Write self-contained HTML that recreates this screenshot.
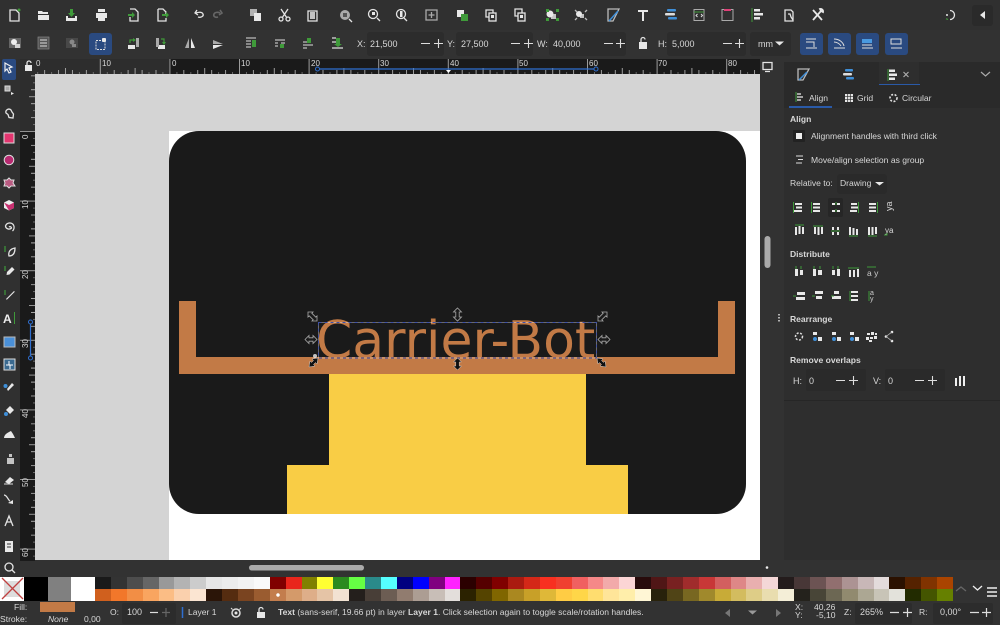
<!DOCTYPE html>
<html><head><meta charset="utf-8"><style>
html,body{margin:0;padding:0;background:#323232;width:1000px;height:625px;overflow:hidden}
svg{position:absolute;left:0;top:0}
text{font-family:"Liberation Sans",sans-serif;font-size:8.55px;fill:#d8d8d8}
text.n{font-size:9px}
.pal{position:absolute;left:95px;top:577px;width:858px;height:24px;display:grid;grid-template-columns:repeat(54,1fr);grid-template-rows:12px 12px}
.pal i{display:block}
.i{fill:none;stroke:#e4e4e4;stroke-width:1.3}
.f{fill:#e8e8e8}
.g{fill:#3f9a3a}
.gs{fill:none;stroke:#3f9a3a;stroke-width:1.2}
.b{fill:#3f8fd8}
</style></head><body>
<svg width="1000" height="625" viewBox="0 0 1000 625">
<defs>
<pattern id="tp" patternUnits="userSpaceOnUse" x="169.4" y="59" width="69.6" height="15"><path d="M.5 0V15M14.4 11V15M28.3 11V15M35.3 9V15M42.3 11V15M56.2 11V15" stroke="#bbb" stroke-width=".8"/><path d="M7.5 13V15M21.4 13V15M49.2 13V15M63.1 13V15" stroke="#888" stroke-width=".7"/></pattern>
<pattern id="lp" patternUnits="userSpaceOnUse" x="20" y="131" width="15" height="69.6"><path d="M0 .5H15M11 14.4H15M11 28.3H15M9 35.3H15M11 42.3H15M11 56.2H15" stroke="#bbb" stroke-width=".8"/><path d="M13 7.5H15M13 21.4H15M13 49.2H15M13 63.1H15" stroke="#888" stroke-width=".7"/></pattern>
</defs>
<rect width="1000" height="625" fill="#323232"/>
<rect y="0" width="1000" height="30" fill="#303030"/>
<rect y="30" width="1000" height="29" fill="#323232"/>

<!-- rulers -->
<rect x="20" y="59" width="740" height="15" fill="#2d2d2d"/>
<rect x="169" y="59" width="591" height="15" fill="#1a1a1a"/>
<rect x="20" y="59" width="15" height="502" fill="#2d2d2d"/>
<rect x="20" y="131" width="15" height="430" fill="#1a1a1a"/>
<rect x="35" y="59" width="725" height="15" fill="url(#tp)"/>
<rect x="20" y="74" width="15" height="487" fill="url(#lp)"/>
<g><text x="36" y="66" style="font-size:8px">0</text><text x="102" y="66" style="font-size:8px">10</text><text x="172" y="66" style="font-size:8px">0</text><text x="241" y="66" style="font-size:8px">10</text><text x="311" y="66" style="font-size:8px">20</text><text x="380" y="66" style="font-size:8px">30</text><text x="450" y="66" style="font-size:8px">40</text><text x="519" y="66" style="font-size:8px">50</text><text x="589" y="66" style="font-size:8px">60</text><text x="658" y="66" style="font-size:8px">70</text><text x="728" y="66" style="font-size:8px">80</text></g>
<text transform="translate(28,139) rotate(-90)" style="font-size:8px">0</text><text transform="translate(28,209) rotate(-90)" style="font-size:8px">10</text><text transform="translate(28,279) rotate(-90)" style="font-size:8px">20</text><text transform="translate(28,348) rotate(-90)" style="font-size:8px">30</text><text transform="translate(28,418) rotate(-90)" style="font-size:8px">40</text><text transform="translate(28,487) rotate(-90)" style="font-size:8px">50</text><text transform="translate(28,557) rotate(-90)" style="font-size:8px">60</text>
<path d="M318 69H596" stroke="#2f6fd0" stroke-width="1.200"/><circle cx="317.500" cy="69" r="2" fill="#1a1a1a" stroke="#2f6fd0"/><circle cx="596" cy="69" r="2" fill="#1a1a1a" stroke="#2f6fd0"/><path d="M446 70h5l-2.500 3z" fill="#fff"/>
<path d="M30.500 322V358" stroke="#2f6fd0" stroke-width="1.200"/><circle cx="30.500" cy="322" r="2" fill="#1a1a1a" stroke="#2f6fd0"/><circle cx="30.500" cy="358" r="2" fill="#1a1a1a" stroke="#2f6fd0"/>
<path d="M25 65h7v6h-7z" class="f"/><path d="M27 65v-2a2 2 0 0 1 4 0" class="i"/>

<!-- canvas -->
<rect x="35" y="74" width="725" height="486" fill="#d4d4d4"/>
<rect x="169" y="131" width="591" height="429" fill="#fff"/>
<rect x="169" y="131" width="577" height="383" rx="30" fill="#1a1a1a"/>
<rect x="329" y="374" width="257" height="91" fill="#f9cd45"/>
<rect x="287" y="465" width="341" height="49" fill="#f9cd45"/>
<path d="M179 301h17v56h522v-56h17v73H179z" fill="#c27a46"/>
<text x="316" y="358" style="font-family:'DejaVu Sans',sans-serif;font-size:52px;fill:#c27a46">Carrier-Bot</text>
<rect x="318.500" y="322.500" width="278" height="35.500" fill="none" stroke="#fff" stroke-width=".8" opacity=".45"/>
<rect x="318.500" y="322.500" width="278" height="35.500" fill="none" stroke="#3c4fa8" stroke-width=".9" stroke-dasharray="3 3"/>
<!-- handles -->
<g fill="#1a1a1a" stroke="#aaa" stroke-width=".8">
<path d="M308 312h5l-1.200 1.200 4 4 1.200-1.200v5h-5l1.200-1.200-4-4-1.200 1.200z"/>
<path d="M607 312h-5l1.200 1.200-4 4-1.200-1.200v5h5l-1.200-1.200 4-4 1.200 1.200z"/>
<path d="M457.500 308l4 4h-2.300v5h2.300l-4 4-4-4h2.300v-5h-2.300z"/>
<path d="M305 339.500l4-4v2.300h4v-2.300l4 4-4 4v-2.300h-4v2.300z"/>
<path d="M598 339.500l4-4v2.300h4v-2.300l4 4-4 4v-2.300h-4v2.300z"/>
</g>
<g fill="#111" stroke="#ccc" stroke-width=".5">
<path d="M318 358l-1 6-1.500-1.500-2 2 1.500 1.500-6 1 1-6 1.500 1.500 2-2-1.500-1.500z"/>
<path d="M597 358l6 1-1.500 1.500 2 2 1.500-1.500 1 6-6-1 1.500-1.500-2-2-1.500 1.500z"/>
<path d="M457.500 358l4 4h-2.300v4h2.300l-4 4-4-4h2.300v-4h-2.300z"/>
</g>
<circle cx="315" cy="356" r="2" fill="#eee" opacity=".8"/>

<!-- scrollbars -->
<rect x="249" y="565" width="115" height="5.500" rx="2.700" fill="#aaa"/>
<rect x="764.500" y="236" width="6" height="32" rx="3" fill="#aaa"/>
<circle cx="767" cy="567.500" r="1.300" fill="#eee"/>
<path d="M763 62.500h9v7h-9zM765 71.500h5" class="i" stroke-width="1"/>
<path d="M779 314v1.500M779 317v1.500M779 320v1.500" stroke="#ddd" stroke-width="1.500"/>

<!-- row 1 icons -->
<g>
<path class="i" d="M10 10h6l3 3v8h-9z"/><circle class="g" cx="19" cy="10" r="1.500"/>
<path class="f" d="M38 11h4l1 1h5v2h-10zM38 15h11v5h-11z"/>
<path class="f" d="M66 16h2v2h7v-2h2v5h-11z"/><path class="g" d="M70 9h3v4h2l-3.500 4-3.500-4h2z"/>
<path class="f" d="M98 9h7v3h-7zM96 13h11v5h-2v3h-7v-3h-2z"/>
<path class="i" d="M130 9h5l3 3v9h-8v-4"/><path class="g" d="M128 14h4v-2l3 3-3 3v-2h-4z"/>
<path class="i" d="M158 9h5l3 3v2M166 18v3h-8v-12"/><path class="g" d="M162 14h4v-2l3 3-3 3v-2h-4z"/>
<path class="i" d="M198 17c3 1 6-1 5-3s-4-2-7-1M197 10l-2 3 3 2" stroke-width="1.600"/>
<path d="M218 17c-3 1-5-1-4-3s4-2 6-1M220 10l2 3-3 2" fill="none" stroke="#666" stroke-width="1.600"/>
<path class="f" d="M250 9h7v7h-7z" opacity=".7"/><rect class="f" x="254" y="13" width="7" height="8"/>
<path class="i" d="M281 9l6 9M288 9l-6 9"/><circle class="i" cx="281" cy="19" r="2"/><circle class="i" cx="288" cy="19" r="2"/>
<path class="i" d="M308 11h9v10h-9z"/><rect class="f" x="310" y="12" width="5" height="7" opacity=".8"/>
<circle cx="345" cy="15" r="5" fill="#aaa"/><path d="M349 19l3 3" class="i"/><rect x="343" y="13" width="4" height="4" fill="#555"/>
<circle class="i" cx="373" cy="14" r="4.500" stroke-width="2"/><path d="M377 18l3 3" class="i" stroke-width="2"/><rect class="f" x="372" y="12" width="3" height="3"/>
<circle class="i" cx="401" cy="14" r="4.500" stroke-width="2"/><path d="M404 18l3 3" class="i" stroke-width="2"/><rect class="f" x="400" y="11" width="2.500" height="6"/>
<path d="M426 10h11v10h-11zM431.500 12v6M428.500 15h6" class="i" style="stroke:#aaa"/>
<rect x="457" y="10" width="7" height="7" class="f"/><rect x="461" y="14" width="7" height="7" fill="#3f9a3a"/>
<path class="i" d="M486 10h7v7h-7z"/><rect x="489" y="13" width="7" height="8" class="i" style="fill:#333"/><rect class="f" x="491" y="15" width="3" height="3"/>
<path class="i" d="M515 9h7v7h-7z"/><rect x="518" y="13" width="7" height="8" class="i" style="fill:#333"/><rect class="f" x="520" y="15" width="3" height="3"/>
<circle class="f" cx="550" cy="14" r="3.500"/><rect class="f" x="551" y="14" width="5" height="5" opacity=".8"/><rect class="g" x="546" y="9" width="3" height="3"/><rect class="g" x="556" y="9" width="3" height="3"/><rect class="g" x="546" y="18" width="3" height="3"/><rect class="g" x="556" y="18" width="3" height="3"/>
<circle class="f" cx="579" cy="14" r="3"/><rect class="f" x="580" y="14" width="4" height="4" opacity=".8"/><path class="i" d="M575 10l2 2M587 10l-2 2M575 20l2-2M587 20l-2-2" style="stroke:#bbb"/>
<path class="i" d="M608 9h11l-6 12h-5z" style="stroke:#bbb"/><path d="M609 21l9-10" stroke="#3f8fd8" stroke-width="1.500"/>
<path class="f" d="M638 10h10v2h-4v9h-2v-9h-4z"/>
<rect x="667" y="9" width="9" height="2.500" rx="1" class="b"/><rect x="665" y="13" width="10" height="2.500" rx="1" fill="#ddd"/><rect x="668" y="17" width="9" height="2.500" rx="1" class="b"/>
<rect x="694" y="9.500" width="10" height="11" fill="none" stroke="#aaa"/><path d="M694 12h10" stroke="#3f9a3a"/><path d="M697.500 14l-1.500 1.500 1.500 1.500M701 14l1.500 1.500-1.500 1.500" stroke="#ddd" fill="none"/>
<rect x="722" y="9.500" width="11" height="11" fill="none" stroke="#aaa"/><rect x="724" y="9" width="7" height="2" fill="#e04078"/>
<path d="M752 8v14" stroke="#3f9a3a"/><rect class="f" x="754" y="9" width="6" height="2.500"/><rect class="f" x="754" y="13" width="9" height="2.500"/><rect class="f" x="754" y="17" width="6" height="2.500"/>
<path class="i" d="M785 10h6l2 2v9h-8z" stroke-width="1.500"/><path class="i" d="M788 14h2l1 3 2 3" stroke-width="1.300"/>
<path d="M813 20l8-9M820 9a2.500 2.500 0 0 1 3 3l-2 -1zM813 10l9 10" fill="none" stroke="#e8e8e8" stroke-width="1.800"/>
<path d="M950 10.500a4.500 4.500 0 1 1 0 9" class="i" stroke-width="2"/><circle cx="947" cy="15" r="1" class="f"/><path d="M948 19.500l-2-.8" class="gs"/>
<rect x="972" y="5" width="21" height="21" rx="3" fill="#2a2a2a"/><path class="f" d="M985 11v8l-5-4z"/>
</g>

<!-- row 2 icons -->
<g>
<rect x="9" y="38" width="12" height="10" fill="#666"/><circle cx="14" cy="42" r="3" fill="#eee"/><path d="M15 44h5v4h-5z" fill="#eee" opacity=".8"/>
<rect x="38" y="37" width="11" height="12" fill="#555" stroke="#888" stroke-width=".7"/><path d="M40 40h7M40 43h7M40 46h7" stroke="#ddd"/>
<rect x="66" y="38" width="12" height="10" fill="#484848"/><circle cx="72" cy="42" r="2.500" fill="#888"/><path d="M72 44h4v3h-4z" fill="#888"/>
<rect x="89" y="33" width="23" height="22" rx="3" fill="#2a4a80"/><rect x="96" y="40.500" width="9" height="9" fill="none" stroke="#ddd" stroke-width="1" stroke-dasharray="2 1"/><rect class="f" x="102" y="38" width="4" height="4" rx="1"/>
<rect class="f" x="128" y="45" width="7" height="4"/><rect x="136" y="38" width="3" height="9" fill="#aaa"/><path class="gs" d="M130 43v-3h4"/><path class="g" d="M133 38l3 2-3 2z"/>
<rect class="f" x="158" y="45" width="7" height="4"/><rect x="156" y="38" width="3" height="9" fill="#aaa"/><path class="gs" d="M161 39h3v3"/><path class="g" d="M162 42h4l-2 3z"/>
<path d="M189 38l-4 10h4z" fill="#aaa"/><path d="M191 38l4 10h-4z" class="f"/>
<path d="M213 40l0 4h10z" fill="#aaa"/><path d="M213 45h10l-10 4z" class="f"/>
<path d="M246 38h10M246 41h5M246 44h5M246 47h5" stroke="#ddd"/><path class="g" d="M252 40h4v7h-4z"/>
<path d="M275 40h10M275 43h3M281 43h4M275 46h3" stroke="#ddd"/><path class="g" d="M280 44h4v4h-4z"/>
<path d="M303 42h4M303 45h10M303 48h4" stroke="#ddd"/><path class="g" d="M307 38h4v5h-4z"/>
<path d="M332 38h4M332 42h4M332 48h11" stroke="#ddd" stroke-width="1.200"/><path class="g" d="M336 38h4v6h2l-4 3-4-3h2z"/>
</g>
<!-- inputs row 2 -->
<g fill="#2c2c2c">
<rect x="367" y="32" width="77" height="24" rx="3"/><rect x="456" y="32" width="77" height="24" rx="3"/><rect x="549" y="32" width="77" height="24" rx="3"/><rect x="667" y="32" width="79" height="24" rx="3"/><rect x="750" y="32" width="41" height="24" rx="3"/>
</g>
<text class="n" x="357" y="47">X:</text><text class="n" x="370" y="47">21,500</text><text class="n" x="447" y="47">Y:</text><text class="n" x="461" y="47">27,500</text><text class="n" x="537" y="47">W:</text><text class="n" x="553" y="47">40,000</text><text class="n" x="658" y="47">H:</text><text class="n" x="672" y="47">5,000</text><text class="n" x="758" y="47">mm</text>
<path d="M421 43.500h9M434 43.500h9M438.500 39v9M511 43.500h9M524 43.500h9M528.500 39v9M604 43.500h9M616 43.500h9M620.500 39v9M723 43.500h9M735 43.500h9M739.500 39v9" stroke="#ddd" stroke-width="1.100"/>
<path d="M775 41.500h9l-4.500 4z" class="f"/>
<rect x="639" y="42" width="8" height="7" class="f"/><path d="M641 42v-2.500a2 2 0 0 1 4 0" class="i"/>
<g>
<rect x="800" y="33" width="23" height="22" rx="3" fill="#2a4a80"/><rect x="828" y="33" width="23" height="22" rx="3" fill="#2a4a80"/><rect x="856" y="33" width="23" height="22" rx="3" fill="#2a4a80"/><rect x="885" y="33" width="23" height="22" rx="3" fill="#2a4a80"/>
<path d="M806 39h10M806 42h8v5M806 48h11" fill="none" stroke="#ddd"/><path d="M834 39c5 0 9 3 10 7M834 42c3 0 6 2 7 4M834 48h11" fill="none" stroke="#ddd"/>
<rect x="862" y="39" width="10" height="4" fill="#4a9ae0"/><path d="M862 45h10M862 48h11" stroke="#ddd"/><path d="M891 39h10v5h-10zM891 48h11" fill="none" stroke="#ddd"/>
</g>

<!-- left toolbar -->
<rect x="0" y="59" width="20" height="510" fill="#303030"/>
<rect x="2" y="59" width="14" height="21" rx="2" fill="#2a4a80"/>
<path d="M5 63l7 4-3 1 2 4-2 1-2-4-2 2z" fill="#2a4a80" stroke="#eee" stroke-width="1.200"/>
<path d="M5 86h5v5h-5z" fill="#aaa" stroke="#ddd"/><path class="f" d="M11 92l3 1.500-3 1.500z"/>
<path class="i" d="M6 113a3 3 0 0 1 5-3l1 2 1.500 2-.5 4-4-.5-1-3z" stroke-width="1.500"/>
<rect x="4" y="133" width="10" height="10" fill="#e4356f" stroke="#ddd"/>
<circle cx="9" cy="160" r="4.800" fill="#b82a70" stroke="#ddd"/>
<path d="M9 178l2 2h3l-1 3 2 3h-4l-2 2-2-2H4l1-3-1-3h3z" fill="#b85a80" stroke="#ddd"/>
<path d="M9 200l5 2.500v5.500l-5 2.500-5-2.500v-5.500z" fill="#eee"/><path d="M9 205l5-2.500v5.500l-5 2.500zM4 202.500l5 2.500v5.500" fill="#c83070"/>
<path class="i" d="M9 227a1.500 1.500 0 0 1 2.500 1 3.500 3.500 0 0 1-6-2 4.500 4.500 0 0 1 8-1 5 5 0 0 1-1 6"/>
<path class="i" d="M9 256c-1-4 1-7 6-8 0 5-2 8-6 8z"/><path class="gs" d="M5 246v6"/>
<path class="f" d="M7 272l5-5 2.500 2.500-5 5-3 .5z"/><path class="gs" d="M5 266v5"/>
<path class="f" d="M6 299l8-8 .8.800-8 8z"/><path class="gs" d="M5 290v5"/>
<text x="3" y="323" style="font-size:12px;font-weight:bold;fill:#eee">A</text><path d="M14.500 312v12" stroke="#3f9a3a"/>
<rect x="4" y="337" width="11" height="10" fill="#4a90d8" stroke="#bbb"/>
<rect x="4" y="359" width="11" height="11" fill="#3a6a90" stroke="#ddd"/><path d="M6 365h3v-4M13 365h-3v4" stroke="#fff" fill="none"/>
<path class="f" d="M7 389l5-6 2 2-6 6z"/><circle class="b" cx="5.500" cy="386" r="2"/>
<path class="f" d="M6 410l4-4 4 4-4 4z"/><circle class="b" cx="6" cy="414" r="2"/>
<path class="f" d="M4 438c0-4 5-6 7-7l2 3 2 4z"/>
<path class="f" d="M7 458h7v6H7zM9 454h3v3H9z" opacity=".8"/>
<path class="f" d="M5 482l5-5 4 3-5 4z"/><path d="M4 484h9" stroke="#ddd"/>
<path class="i" d="M4 495c3 0 4 5 6 6" stroke-width="1.500"/><path class="f" d="M8 503l5-3 0 4z"/>
<path class="i" d="M5 526l4-10 4 10M6.500 522h5"/>
<rect x="5" y="541" width="8" height="11" class="f"/><path d="M7 544h4M7 547h4" stroke="#333"/>
<circle class="i" cx="9" cy="567" r="4" stroke-width="1.500"/><path class="i" d="M12 570l3 3" stroke-width="1.500"/>

<!-- dock panel -->
<rect x="784" y="62" width="216" height="498" fill="#2e2e2e"/>
<rect x="784" y="62" width="216" height="23" fill="#2a2a2a"/>
<rect x="879" y="62" width="40" height="23" fill="#2e2e2e"/>
<rect x="879" y="84" width="41" height="2" fill="#2a5aa8"/>
<path d="M784 400.500H1000" stroke="#262626"/>
<path class="i" style="stroke:#bbb" d="M798 69h11l-6 11h-5z"/><path d="M799 80l8-8" stroke="#3f8fd8" stroke-width="1.500"/>
<rect x="845" y="69" width="8" height="2.500" rx="1" class="b"/><rect x="843" y="73" width="9" height="2.500" rx="1" fill="#ddd"/><rect x="846" y="77" width="8" height="2.500" rx="1" class="b"/>
<path d="M888 69v12" stroke="#3f9a3a"/><rect class="f" x="889" y="69.500" width="6" height="2.500"/><rect class="f" x="889" y="73.500" width="8" height="2.500"/><rect class="f" x="889" y="77.500" width="6" height="2.500"/>
<path d="M903.500 72l5 5M908.500 72l-5 5" stroke="#aaa" stroke-width="1.200"/>
<path d="M981 72l4.500 4 4.500-4" fill="none" stroke="#aaa" stroke-width="1.200"/>
<rect x="784" y="85" width="216" height="23" fill="#2a2a2a"/>
<rect x="789" y="106" width="43" height="2" fill="#2a5aa8"/>
<path d="M797 94h4M797 97h6M797 100h4" stroke="#eee" stroke-width="1.200"/><path d="M796 92v10" stroke="#3f9a3a"/>
<text x="809" y="101">Align</text>
<path d="M845 94h8v8h-8z" class="f"/><path d="M847.700 94v8M850.300 94v8M845 96.700h8M845 99.300h8" stroke="#2a2a2a" stroke-width=".7"/>
<text x="857" y="101">Grid</text>
<circle cx="893.500" cy="98" r="3.500" fill="none" stroke="#ddd" stroke-width="1.600" stroke-dasharray="2 1.500"/>
<text x="902" y="101">Circular</text>
<text x="790" y="122" style="font-weight:bold">Align</text>
<rect x="793" y="130" width="12" height="12" rx="1" fill="#222"/><rect x="796" y="133" width="6" height="6" fill="#eee"/>
<text x="811" y="139">Alignment handles with third click</text>
<path d="M796 156h7M798 159.500h5M796 163h6" stroke="#ddd" stroke-width="1.100"/>
<text x="811" y="163">Move/align selection as group</text>
<text x="790" y="186">Relative to:</text>
<rect x="837" y="174" width="50" height="20" rx="3" fill="#2a2a2a"/>
<text x="840" y="186">Drawing</text><path d="M875 182h9l-4.500 3.500z" class="f"/>
<rect x="828" y="198" width="15" height="19" rx="2" fill="#262626"/>
<!-- align row 1 -->
<g stroke="#e8e8e8" stroke-width="2"><path d="M795 204h7M796 207.500h6M794 211h8"/><path d="M813 204h7M813 207.500h7M813 211h7"/><path d="M832 204h3M837 204h3M832 211h3M837 211h3"/><path d="M851 204h6M851 207.500h7M850 211h7"/><path d="M869 204h7M869 207.500h7M869 211h7"/></g>
<path d="M793.500 202v11M811.500 202v11M836 202v3M836 209v3M858.500 202v11M877.500 202v11" stroke="#3f9a3a"/>
<text x="886" y="210" style="font-size:9px" transform="rotate(-90 889 207)" dx="-1">ya</text>
<!-- align row 2 -->
<g stroke="#e8e8e8" stroke-width="2"><path d="M796 227v8M799.500 226v8M803 227v7"/><path d="M815 227v7M818.500 227v8M822 227v7"/><path d="M833 227v3M833 232v3M838 227v3M838 232v3"/><path d="M850 227v8M853.500 228v7M857 229v6"/><path d="M869 227v8M872.500 227v8M876 227v7"/></g>
<path d="M795 225h9M813 226h10M831 231h9M849 236h9M868 236h9" stroke="#3f9a3a"/>
<text x="885" y="233" style="font-size:8px;fill:#ddd">ya</text><path d="M884 235h3v-2" stroke="#3f9a3a" fill="none"/>
<text x="790" y="257" style="font-weight:bold">Distribute</text>
<g class="f"><rect x="795" y="269" width="3" height="7"/><rect x="800" y="270" width="3" height="5"/><rect x="813" y="269" width="3" height="7"/><rect x="818" y="270" width="4" height="5"/><rect x="832" y="270" width="3" height="5"/><rect x="837" y="269" width="3" height="7"/><rect x="849" y="270" width="2" height="7"/><rect x="853" y="270" width="2" height="7"/><rect x="857" y="269" width="2" height="8"/></g>
<path d="M796 266v3M801 266v3M814 266v3M820 266v3M833 266v3M838 266v3M848 268h11" stroke="#3f9a3a"/>
<text x="867" y="276" style="font-size:8.500px;fill:#ccc">a y</text><path d="M867 267h9" stroke="#3f9a3a"/>
<g class="f"><rect x="797" y="292" width="8" height="3"/><rect x="796" y="297" width="9" height="3"/><rect x="815" y="291" width="8" height="3"/><rect x="816" y="296" width="6" height="3"/><rect x="834" y="291" width="5" height="3"/><rect x="832" y="296" width="9" height="3"/><rect x="851" y="291" width="7" height="2"/><rect x="851" y="295" width="7" height="2"/><rect x="851" y="299" width="7" height="2"/></g>
<path d="M793 296h3M812 296h3M831 296h3M850 291v10" stroke="#3f9a3a"/>
<text x="870" y="295" style="font-size:7px;fill:#ccc">a</text><text x="870" y="301" style="font-size:7px;fill:#ccc">y</text><path d="M869 291v10" stroke="#3f9a3a"/>
<text x="790" y="322" style="font-weight:bold">Rearrange</text>
<circle cx="799" cy="336.500" r="3.500" fill="none" stroke="#ddd" stroke-width="1.500" stroke-dasharray="2 1.500"/>
<g class="f"><rect x="813" y="332" width="4" height="3"/><rect x="818" y="337" width="4" height="4"/><rect x="832" y="332" width="4" height="3"/><rect x="837" y="337" width="4" height="4"/><rect x="850" y="332" width="4" height="3"/><rect x="855" y="337" width="4" height="4"/></g>
<circle class="b" cx="815" cy="339" r="2"/><circle class="b" cx="834" cy="339" r="2"/><circle class="b" cx="852" cy="339" r="2"/>
<g class="f"><rect x="867" y="333" width="3" height="2"/><rect x="871" y="332" width="3" height="3"/><rect x="875" y="333" width="2" height="2"/><rect x="866" y="337" width="3" height="3"/><rect x="870" y="337" width="3" height="2"/><rect x="874" y="336" width="3" height="3"/><rect x="869" y="340" width="3" height="2"/><circle cx="886" cy="336.500" r="1.300"/><circle cx="892" cy="332" r="1.300"/><circle cx="892" cy="341" r="1.300"/></g>
<path d="M886 336.500l6-4.500M886 336.500l6 4.500" stroke="#bbb" stroke-width=".7"/>
<text x="790" y="363" style="font-weight:bold">Remove overlaps</text>
<rect x="806" y="369" width="60" height="22" rx="2" fill="#2a2a2a"/><rect x="885" y="369" width="60" height="22" rx="2" fill="#2a2a2a"/>
<text class="n" x="793" y="384">H:</text><text class="n" x="809" y="384">0</text><text class="n" x="873" y="384">V:</text><text class="n" x="888" y="384">0</text>
<path d="M836 380.500h9M849 380.500h9M853.500 376v9M915 380.500h9M928 380.500h9M932.500 376v9" stroke="#ddd" stroke-width="1.100"/>
<path d="M956 378v8M960 376v10M964 376v10" stroke="#eee" stroke-width="2"/>

<!-- big swatches -->
<rect x="0" y="577" width="24" height="24" fill="#fff"/><rect x="4" y="581" width="16" height="16" fill="#ddd"/>
<path d="M2 578L23 599M23 578L2 599" stroke="#c04040" stroke-width="1.300"/>
<rect x="24" y="577" width="24" height="24" fill="#000"/><rect x="48" y="577" width="23" height="24" fill="#808080"/><rect x="71" y="577" width="24" height="24" fill="#fff"/>
<path d="M956 591l5-4 5 4" fill="none" stroke="#666" stroke-width="1.300"/><path d="M973 586l4.500 4 4.500-4" fill="none" stroke="#eee" stroke-width="1.300"/>
<path d="M987 588h10M987 592h10M987 596h10" stroke="#eee" stroke-width="1.400"/>

<!-- status bar -->
<rect x="0" y="601" width="1000" height="24" fill="#323232"/>
<text x="14" y="610">Fill:</text><text x="0" y="622">Stroke:</text>
<rect x="40" y="602" width="35" height="10" fill="#c27a46"/>
<text x="48" y="622" style="font-style:italic">None</text><text x="84" y="622">0,00</text>
<text x="110" y="615">O:</text><rect x="122" y="603" width="54" height="21" rx="2" fill="#2c2c2c"/><text class="n" x="127" y="615">100</text>
<path d="M150 612.500h8" stroke="#ddd" stroke-width="1.200"/><path d="M162 612.500h8M166 608v9" stroke="#666" stroke-width="1.200"/>
<path d="M182.500 607v11" stroke="#2f6fd0" stroke-width="1.500"/>
<text x="188" y="615">Layer 1</text>
<circle cx="236" cy="613" r="4" fill="none" stroke="#ddd" stroke-width="1.500"/><circle cx="236" cy="613" r="1.500" class="f"/><path d="M231 608l1.500 1.500M241 608l-1.500 1.500" stroke="#ddd"/>
<rect x="257" y="612" width="8" height="6" class="f"/><path d="M259 612v-2.500a2 2 0 0 1 4 0" class="i"/>
<text x="278" y="615"><tspan font-weight="bold">Text</tspan> (sans-serif, 19.66 pt) in layer <tspan font-weight="bold">Layer 1</tspan>. Click selection again to toggle scale/rotation handles.</text>
<path d="M730 609v8l-5-4z" fill="#777"/><path d="M748 610.500h9l-4.500 4z" fill="#999"/><path d="M776 609v8l5-4z" fill="#777"/>
<text x="795" y="610">X:</text><text x="795" y="618">Y:</text><text x="814" y="610">40,26</text><text x="816" y="618">-5,10</text>
<text x="844" y="615">Z:</text><rect x="855" y="603" width="57" height="21" rx="2" fill="#2c2c2c"/><text class="n" x="860" y="615">265%</text>
<path d="M890 612.500h9M903 612.500h9M907.500 608v9" stroke="#ddd" stroke-width="1.200"/>
<text x="919" y="615">R:</text><rect x="933" y="603" width="60" height="21" rx="2" fill="#2c2c2c"/><text class="n" x="940" y="615">0,00°</text>
<path d="M970 612.500h9M982 612.500h9M986.500 608v9" stroke="#ddd" stroke-width="1.200"/>
</svg>
<div class="pal">
<i style="background:#1a1a1a"></i><i style="background:#333"></i><i style="background:#4d4d4d"></i><i style="background:#666"></i><i style="background:#999"></i><i style="background:#b3b3b3"></i><i style="background:#ccc"></i><i style="background:#e6e6e6"></i><i style="background:#ececec"></i><i style="background:#f2f2f2"></i><i style="background:#f9f9f9"></i><i style="background:#800000"></i><i style="background:#e9261c"></i><i style="background:#808000"></i><i style="background:#ffff33"></i><i style="background:#2b8a1f"></i><i style="background:#66ff44"></i><i style="background:#2a8a8a"></i><i style="background:#55ffff"></i><i style="background:#000080"></i><i style="background:#0000ff"></i><i style="background:#800080"></i><i style="background:#ff22ff"></i><i style="background:#2b0000"></i><i style="background:#550000"></i><i style="background:#800000"></i><i style="background:#aa1a10"></i><i style="background:#d42818"></i><i style="background:#f83020"></i><i style="background:#f04030"></i><i style="background:#f06060"></i><i style="background:#f58888"></i><i style="background:#f2aaaa"></i><i style="background:#fcd5d5"></i><i style="background:#280b0b"></i><i style="background:#501616"></i><i style="background:#782121"></i><i style="background:#a02c2c"></i><i style="background:#c83737"></i><i style="background:#d35f5f"></i><i style="background:#de8787"></i><i style="background:#e9afaf"></i><i style="background:#f4d7d7"></i><i style="background:#241c1c"></i><i style="background:#483737"></i><i style="background:#6c5353"></i><i style="background:#916f6f"></i><i style="background:#ac9393"></i><i style="background:#c8b7b7"></i><i style="background:#e3dbdb"></i><i style="background:#2b1100"></i><i style="background:#552200"></i><i style="background:#803300"></i><i style="background:#aa4400"></i>
<i style="background:#d0601e"></i><i style="background:#f2772a"></i><i style="background:#f28e45"></i><i style="background:#f9a560"></i><i style="background:#fbbd85"></i><i style="background:#fad0ad"></i><i style="background:#fbe5d2"></i><i style="background:#2b1508"></i><i style="background:#552c10"></i><i style="background:#7a4420"></i><i style="background:#9a5c30"></i><i style="background:#c37d4d;background-image:radial-gradient(circle,#fff 0 1.500px,transparent 2px)"></i><i style="background:#d49a6a"></i><i style="background:#deae89"></i><i style="background:#e5c4a6"></i><i style="background:#f2e2d2"></i><i style="background:#241f1c"></i><i style="background:#483e37"></i><i style="background:#6c5d53"></i><i style="background:#917c6f"></i><i style="background:#ac9d93"></i><i style="background:#c8beb7"></i><i style="background:#e3dedb"></i><i style="background:#2b2200"></i><i style="background:#554400"></i><i style="background:#806600"></i><i style="background:#aa8820"></i><i style="background:#c8a028"></i><i style="background:#dfb838"></i><i style="background:#ffcc44"></i><i style="background:#ffd648"></i><i style="background:#ffdd6f"></i><i style="background:#ffe599"></i><i style="background:#ffeeaa"></i><i style="background:#fff6d5"></i><i style="background:#28220b"></i><i style="background:#504416"></i><i style="background:#786721"></i><i style="background:#a0892c"></i><i style="background:#c8ab37"></i><i style="background:#d3bc5f"></i><i style="background:#decd87"></i><i style="background:#e9ddaf"></i><i style="background:#f4eed7"></i><i style="background:#24221c"></i><i style="background:#484537"></i><i style="background:#6c6753"></i><i style="background:#918a6f"></i><i style="background:#aca793"></i><i style="background:#c8c4b7"></i><i style="background:#e3e2db"></i><i style="background:#222b00"></i><i style="background:#445500"></i><i style="background:#668000"></i><i style="background:#88aa00"></i>
</div>
</body></html>
